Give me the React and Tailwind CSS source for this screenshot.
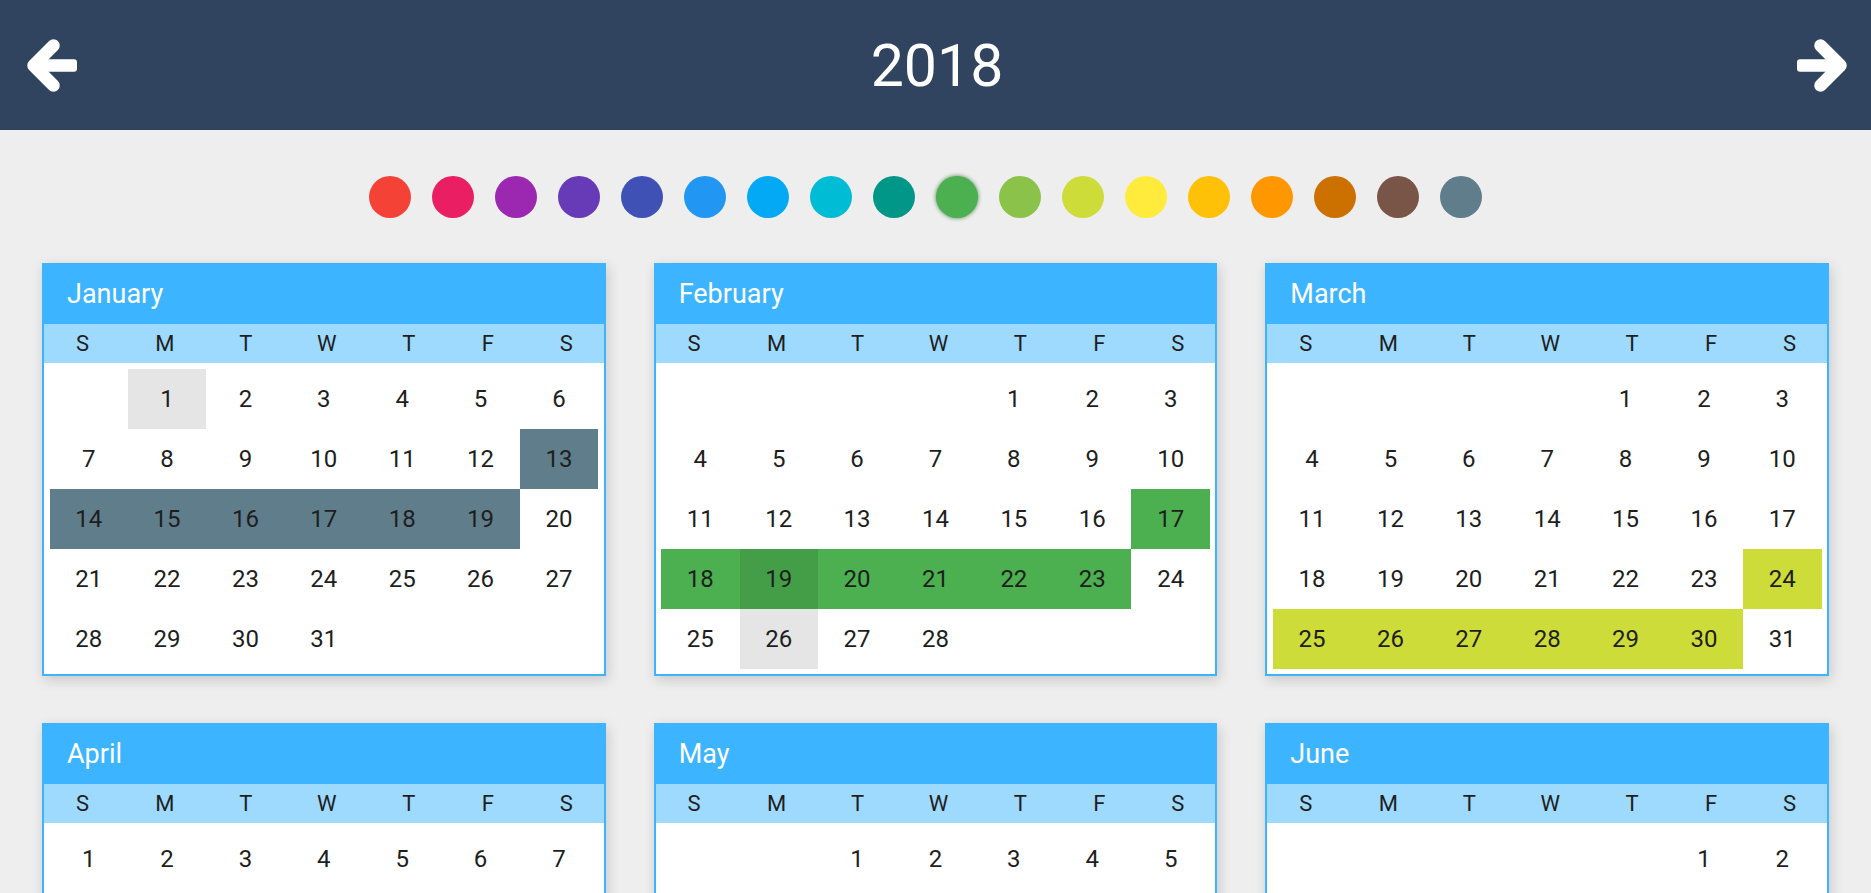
import React from "react";

const DOTS = [
  "#f44336", "#e91e63", "#9c27b0", "#673ab7", "#3f51b5", "#2196f3",
  "#03a9f4", "#00bcd4", "#009688", "#4caf50", "#8bc34a", "#cddc39",
  "#ffeb3b", "#ffc107", "#ff9800", "#cc7000", "#795548", "#607d8b",
];

const MONTHS = [
  "January", "February", "March", "April", "May", "June",
  "July", "August", "September", "October", "November", "December",
];

const HL = {
  0: { 1: "#e5e5e5", 13: "#607d8b", 14: "#607d8b", 15: "#607d8b", 16: "#607d8b", 17: "#607d8b", 18: "#607d8b", 19: "#607d8b" },
  1: { 17: "#4caf50", 18: "#4caf50", 19: "#449e48", 20: "#4caf50", 21: "#4caf50", 22: "#4caf50", 23: "#4caf50", 26: "#e5e5e5" },
  2: { 24: "#cddc39", 25: "#cddc39", 26: "#cddc39", 27: "#cddc39", 28: "#cddc39", 29: "#cddc39", 30: "#cddc39" },
};

function Arrow({ flip }) {
  return (
    <svg width="50" height="53" viewBox="0 0 50 53" className={flip ? "-scale-x-100" : ""}>
      <polyline
        points="26.5,6.5 6.5,26.5 26.5,46.5"
        fill="none"
        stroke="#ffffff"
        strokeWidth="12.5"
        strokeLinecap="round"
        strokeLinejoin="round"
      />
      <rect x="6" y="20.25" width="44" height="12.5" rx="3" fill="#ffffff" />
    </svg>
  );
}

function Month({ idx }) {
  const first = new Date(2018, idx, 1).getDay();
  const days = new Date(2018, idx + 1, 0).getDate();
  const cells = [];
  for (let i = 0; i < first; i++) cells.push(null);
  for (let d = 1; d <= days; d++) cells.push(d);
  while (cells.length % 7 !== 0) cells.push(null);
  const hl = HL[idx] || {};
  return (
    <div className="bg-white border-2 border-[#3db4ff] shadow-[2px_4px_12px_rgba(0,0,0,0.16)]">
      <div className="h-[59px] bg-[#3db4ff] flex items-center pl-[23px] text-white text-[27px] leading-none">
        {MONTHS[idx]}
      </div>
      <div className="h-[39px] bg-[#9ed9fe] grid grid-cols-[77fr_88fr_74fr_88fr_76fr_82fr_75fr] items-center text-[22px] text-[#1e1e1e] leading-none">
        {["S", "M", "T", "W", "T", "F", "S"].map((w, i) => (
          <div key={i} className="text-center">{w}</div>
        ))}
      </div>
      <div className="pt-[6px] pb-[5px] px-[5.5px] grid grid-cols-7">
        {cells.map((d, i) => (
          <div
            key={i}
            className="h-[60px] flex items-center justify-center text-[24px] text-[#1e1e1e] leading-none"
            style={d && hl[d] ? { backgroundColor: hl[d] } : undefined}
          >
            {d || ""}
          </div>
        ))}
      </div>
    </div>
  );
}

export default function App() {
  return (
    <div
      className="w-full h-[893px] overflow-hidden bg-[#eeeeee]"
      style={{ fontFamily: "Roboto, 'Noto Sans', sans-serif" }}
    >
      <div className="h-[130px] bg-[#30445f] grid grid-cols-[1fr_auto_1fr] items-center pl-[27px] pr-[24px]">
        <div className="justify-self-start"><Arrow /></div>
        <div className="text-white text-[59px] leading-none">2018</div>
        <div className="justify-self-end"><Arrow flip /></div>
      </div>
      <div className="flex justify-center pt-[46px]">
        {DOTS.map((c, i) => (
          <div
            key={i}
            className={
              "w-[42px] h-[42px] rounded-full mr-[21px] " +
              (i === 9 ? "shadow-[0_0_4px_rgba(30,110,30,0.8)]" : "")
            }
            style={{ backgroundColor: c }}
          />
        ))}
      </div>
      <div className="grid grid-cols-3 gap-x-[48px] gap-y-[47px] px-[42px] pt-[45px]">
        {MONTHS.map((m, i) => (
          <Month key={m} idx={i} />
        ))}
      </div>
    </div>
  );
}
